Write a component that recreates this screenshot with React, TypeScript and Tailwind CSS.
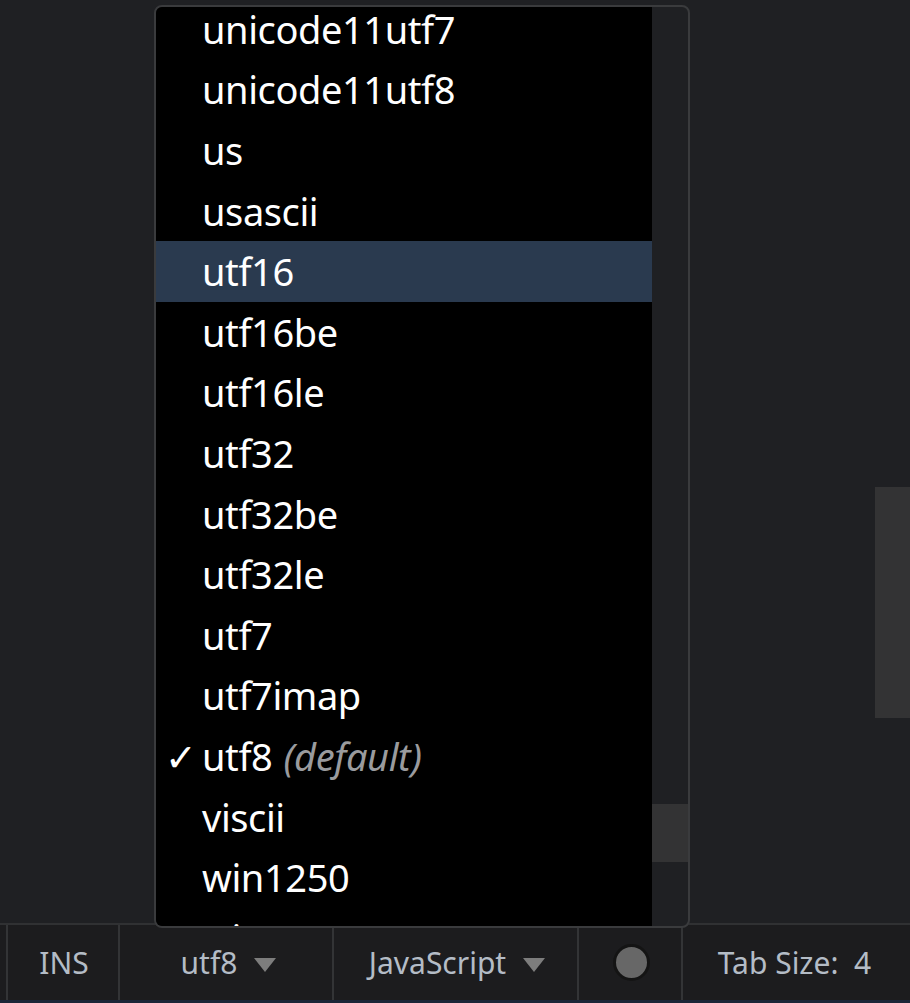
const ITEMS = [
  'unicode11utf7',
  'unicode11utf8',
  'us',
  'usascii',
  'utf16',
  'utf16be',
  'utf16le',
  'utf32',
  'utf32be',
  'utf32le',
  'utf7',
  'utf7imap',
  'utf8',
  'viscii',
  'win1250',
  'win1251',
];

const FONT = { fontFamily: '"Noto Sans", "Open Sans", sans-serif' };

function Caret() {
  return (
    <svg width="24" height="16" viewBox="0 0 24 16" className="ml-4 mt-1">
      <path d="M1 1 L23 1 L12 15 Z" fill="#7d7d7d" />
    </svg>
  );
}

function EncodingMenu() {
  return (
    <div className="absolute left-[154px] top-[5px] w-[536px] h-[923px] border-2 border-[#3a3b3d] rounded-lg overflow-hidden flex bg-[#1f2023] z-10">
      <div className="w-[496px] h-full bg-black overflow-hidden">
        <ul className="-mt-[8px]">
          {ITEMS.map(item => (
            <li
              key={item}
              className={`h-[60.6px] flex items-center text-[38px] text-white relative pl-[46px] ${item === 'utf16' ? 'bg-[#2a3a4f]' : ''}`}
            >
              {item === 'utf8' && (
                <span className="absolute left-[9px] text-[38px] font-light">✓</span>
              )}
              <span className="tracking-[-0.4px]">{item}</span>
              {item === 'utf8' && (
                <span className="italic text-[#9a9b9e] ml-[11px] tracking-[-0.4px]">(default)</span>
              )}
            </li>
          ))}
        </ul>
      </div>
      <div className="flex-1 flex flex-col">
        <div className="h-[797px]" />
        <div className="h-[58px] bg-[#333334]" />
      </div>
    </div>
  );
}

export default function App() {
  return (
    <div className="w-[910px] h-[1003px] relative flex flex-col bg-[#1f2023] overflow-hidden" style={FONT}>
      {/* Editor */}
      <div className="flex-1 flex">
        <div className="flex-1" />
        <div className="w-[35px] flex flex-col">
          <div className="h-[487px]" />
          <div className="h-[231px] bg-[#333334]" />
        </div>
      </div>

      {/* Status bar */}
      <div className="h-[80px] flex flex-col bg-[#1c1c1e] border-t-2 border-[#303133]">
        <div className="flex-1 flex text-[30px] text-[#b4bcc6]">
          <div className="w-[8px] border-r-2 border-[#333436]" />
          <div className="w-[112px] border-r-2 border-[#333436] flex items-center justify-center pl-[2px]">INS</div>
          <div className="w-[214px] border-r-2 border-[#333436] flex items-center justify-center pl-[6px]">
            utf8
            <Caret />
          </div>
          <div className="w-[245px] border-r-2 border-[#333436] flex items-center justify-center pl-[4px]">
            JavaScript
            <Caret />
          </div>
          <div className="w-[104px] border-r-2 border-[#333436] flex items-center justify-center pl-[2px]">
            <div className="w-[37px] h-[37px] rounded-full bg-[#676767] border-[3px] border-[#141414]" />
          </div>
          <div className="flex-1 flex items-center justify-center pr-[4px]">
            Tab Size:&nbsp;&nbsp;4
          </div>
        </div>
        <div className="h-[3px] bg-[#1b2638]" />
      </div>

      <EncodingMenu />
    </div>
  );
}
